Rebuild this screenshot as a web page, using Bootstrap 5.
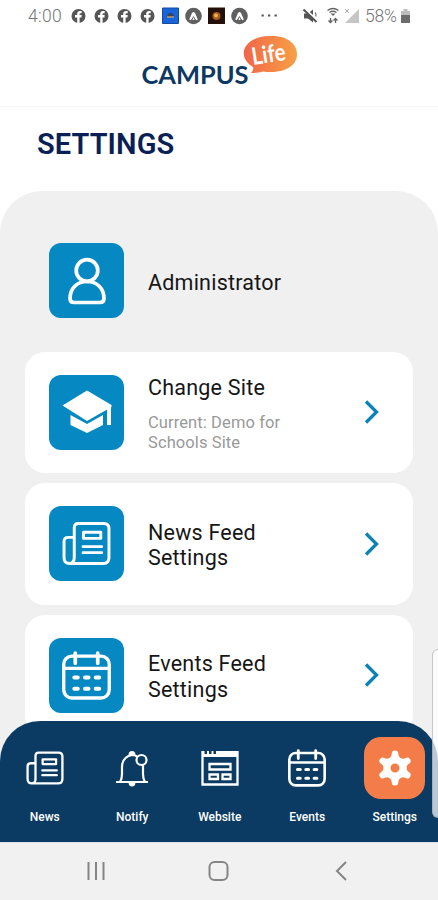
<!DOCTYPE html>
<html lang="en">
<head>
<meta charset="utf-8">
<meta name="viewport" content="width=device-width, initial-scale=1">
<title>Campus Life – Settings</title>
<link rel="stylesheet" href="https://cdn.jsdelivr.net/npm/bootstrap@5.3.0/dist/css/bootstrap.min.css">
<style>
  body { font-family: Roboto, "Liberation Sans", sans-serif; color: #161616; background: #fff; }
  svg { display: block; flex: none; }
  .phone { width: 438px; height: 900px; }
  .status { height: 32px; padding-left: 28px; color: #747474; font-size: 17.5px; font-weight: 300; line-height: 32px; }
  .status-time { width: 39px; letter-spacing: .3px; }
  .status-pct { width: 38px; padding-left: 4px; letter-spacing: -.2px; }
  .brand { height: 75px; border-bottom: 1px solid #f7f7f7; padding-left: 140px; }
  .page-title { height: 84px; padding: 18px 0 0 37px; font-size: 29px; line-height: 38px; font-weight: 600; letter-spacing: .1px; color: #0a1f56; }
  .panel { background: #f0f0f0; border-radius: 42px 42px 0 0; padding: 29px 25px 0; gap: 10px; }
  .entry { height: 121.5px; border-radius: 20px; padding: 0 33px 0 24px; border: 0; background: #fff; }
  .entry-user { background: transparent; }
  .tile { width: 75px; height: 75px; border-radius: 12px; background: #0689c2; margin-right: 24px; flex: none; }
  .entry-text { padding-top: 3px; }
  .entry-name { font-size: 21.5px; line-height: 25.5px; letter-spacing: .22px; }
  .entry-note { font-size: 16.5px; line-height: 20px; color: #999; letter-spacing: .1px; padding-top: 12px; }
  .bar-wrap { margin-top: -46px; }
  .tabs { height: 121px; border-radius: 40px 40px 0 0; background: #0b3b62; padding: 16px 0 0 1px; }
  .tab { width: 87.5px; flex: none; color: #fff; font-size: 12px; line-height: 16px; font-weight: 500; }
  .tab-icon { width: 61px; height: 62px; border-radius: 17px; margin-bottom: 10px; }
  .tab-on { background: #f47c48; }
  .sysbar { height: 58px; background: #f1f1f1; border-top: 1px solid #dfe3e6; padding: 0 2px 2px 0; }
  .edge { left: 432px; top: 649px; width: 12px; height: 169px; border-radius: 8px; border: 1px solid rgba(150,150,150,.5); background: rgba(255,255,255,.72); }
</style>
</head>
<body>
<svg width="0" height="0" class="position-absolute">
  <defs>
    <symbol id="fb" viewBox="0 0 23 20"><circle cx="11.500" cy="10" r="7" fill="#555"/><path d="M10.200 17.200V11.500H8V9h2.200V7.800C10.200 5.900 11.400 5 13 5h1.700v2.200h-1.100c-.8 0-1 .4-1 1V9h2.100l-.3 2.500h-1.800v5.700z" fill="#fff"/></symbol>
    <symbol id="apex" viewBox="0 0 23 20"><circle cx="11.500" cy="10" r="8.300" fill="#606060"/><path d="M7.200 13.500 10 7q1.500-2 3 0l2.800 6.500-1.600.8-2.700-4.300-2.700 4.300z" fill="#fff"/><path d="M10.500 14l1-3 1 3z" fill="#fff"/></symbol>
    <symbol id="paper" viewBox="0 0 48 42"><g fill="none" stroke="#fff" stroke-linejoin="round"><path stroke-width="2.900" d="M12 35V5.500q0-4 4-4h25q5 0 5 5V35q0 5.500-5.500 5.500H7.500Q2 40.500 2 35V19q0-4 4-4h6M12 35q0 5.500-5 5.500"/><path stroke-width="2.800" d="M21 10h17v6H21z"/><path stroke-width="2.600" stroke-linecap="round" d="M20.500 24h18.500M20.500 30h18.500"/></g></symbol>
    <symbol id="cal" viewBox="0 0 48 48"><g fill="none" stroke="#fff"><rect x="1.700" y="5" width="44.600" height="41" rx="8" stroke-width="3.300"/><path stroke-width="3" d="M2 17h44"/><path stroke-width="3.600" stroke-linecap="round" d="M13 2v10M35 2v10"/><path stroke-width="3.800" stroke-linecap="round" d="M12 26h3.500M22.500 26h3.500M33 26h3.500M12 37h3.500M22.500 37h3.500M33 37h3.500"/></g></symbol>
    <symbol id="next" viewBox="0 0 16 26"><path d="M2 2.500 12.500 13 2 23.500" fill="none" stroke="#0b83b6" stroke-width="3.300"/></symbol>
  </defs>
</svg>
<div class="phone d-flex flex-column position-relative overflow-hidden">
  <div class="status d-flex align-items-center flex-shrink-0">
    <span class="status-time">4:00</span>
    <svg width="23" height="20"><use href="#fb"/></svg>
    <svg width="23" height="20"><use href="#fb"/></svg>
    <svg width="23" height="20"><use href="#fb"/></svg>
    <svg width="23" height="20"><use href="#fb"/></svg>
    <svg width="23" height="20" viewBox="0 0 23 20"><path fill="#1765d8" stroke="#174a9c" d="M3.500 2h16v15.500h-16z"/><path d="M8 11q0-4 3.500-4T15 11z" fill="#39445b"/><path d="M8 11h7" stroke="#b89c70" stroke-width="1.500"/></svg>
    <svg width="23" height="20"><use href="#apex"/></svg>
    <svg width="23" height="20" viewBox="0 0 23 20"><path fill="#241008" d="M3 1.500h17v16.500H3z"/><circle cx="11.500" cy="10" r="4" fill="#a45d17"/><circle cx="11" cy="9.500" r="2" fill="#efb04b"/></svg>
    <svg width="23" height="20"><use href="#apex"/></svg>
    <svg width="48" height="20" viewBox="0 0 48 20"><path d="M10.500 9.500h2.300M17 9.500h2.300M23.500 9.500h2.300" stroke="#555" stroke-width="2"/></svg>
    <svg width="23" height="20" viewBox="0 0 23 20"><path d="M5 7.500h4L14 3.500v13l-5-4H5z" fill="#555"/><path d="M5.500 2.500 19 15" stroke="#fff" stroke-width="2"/><path d="M4.500 3.500 17.500 16" stroke="#555" stroke-width="2"/><path d="M16 6.500q1.500 1.500.8 4" fill="none" stroke="#777" stroke-width="1.300"/></svg>
    <svg width="22" height="20" viewBox="0 0 22 20"><g fill="none" stroke="#666" stroke-width="1.400"><path d="M5.500 4.500q5.500-4 11 0M7.500 6.500q3.500-2.500 7 0"/><path d="M8.500 12v4.500m-2-2 2 2 2-2M13.500 17v-4.500m-2 2 2-2 2 2"/></g><path d="M8.500 7.500h5L11 10z" fill="#666"/></svg>
    <svg width="17" height="20" viewBox="0 0 17 20"><path d="M15 3v14H1z" fill="#c6c6c6"/><path d="m1 3 4 4m0-4L1 7" stroke="#aaa"/></svg>
    <span class="status-pct">58%</span>
    <svg width="14" height="20" viewBox="0 0 14 20"><path d="M2 5h2.500V3h4v2H11v4H2z" fill="#bdbdbd"/><path d="M2 9h9v8H2z" fill="#6c6c6c"/></svg>
  </div>

  <header class="brand flex-shrink-0">
    <svg width="160" height="64" viewBox="140 32 160 64" role="img" aria-label="Campus Life">
      <defs><linearGradient id="bub"><stop offset="0" stop-color="#f26648"/><stop offset="1" stop-color="#f7a045"/></linearGradient></defs>
      <path d="M253 67c-17-10-10-30 16-31 17-1 28 7 28 18 0 12-12 18-26 18q-4 0-8-.6-5 1.500-12 1.600 3-3 2-6z" fill="url(#bub)"/>
      <text x="141.500" y="84.300" font-family="Lato, sans-serif" font-weight="700" font-size="24" textLength="107" lengthAdjust="spacingAndGlyphs" fill="#0c3862">CAMPUS</text>
      <text transform="translate(253 65) rotate(-9)" font-family="Lato, sans-serif" font-weight="700" font-size="24" textLength="34" lengthAdjust="spacingAndGlyphs" fill="#fff">Life</text>
    </svg>
  </header>

  <h1 class="page-title flex-shrink-0 m-0">SETTINGS</h1>

  <main class="panel d-flex flex-column overflow-hidden flex-grow-1">
    <section class="entry entry-user d-flex align-items-center flex-shrink-0">
      <div class="tile d-flex align-items-center justify-content-center">
        <svg width="40" height="48" viewBox="0 0 40 48"><g fill="none" stroke="#fff" stroke-width="3.700"><circle cx="20" cy="13.500" r="10.800"/><path d="M20 24.500c10 0 17 7 17 17q0 4-4 4H7q-4 0-4-4c0-10 7-17 17-17z"/></g></svg>
      </div>
      <div class="entry-name entry-text">Administrator</div>
    </section>
    <section class="entry card flex-row align-items-center flex-shrink-0">
      <div class="tile d-flex align-items-center justify-content-center">
        <svg width="50" height="44" viewBox="0 0 50 44"><g fill="#fff"><path d="M25 .500 49.500 15v2L25 31 .500 15.500z"/><path d="m8.500 25 16.500 9 16-9v10L25 43 8.500 35z"/><path d="M45 16h4v19h-4z"/></g></svg>
      </div>
      <div class="entry-text flex-grow-1">
        <div class="entry-name">Change Site</div>
        <div class="entry-note">Current: Demo for<br>Schools Site</div>
      </div>
      <svg width="16" height="26"><use href="#next"/></svg>
    </section>
    <section class="entry card flex-row align-items-center flex-shrink-0">
      <div class="tile d-flex align-items-center justify-content-center">
        <svg width="49" height="43"><use href="#paper"/></svg>
      </div>
      <div class="entry-name entry-text flex-grow-1">News Feed<br>Settings</div>
      <svg width="16" height="26"><use href="#next"/></svg>
    </section>
    <section class="entry card flex-row align-items-center flex-shrink-0">
      <div class="tile d-flex align-items-center justify-content-center">
        <svg width="49" height="49"><use href="#cal"/></svg>
      </div>
      <div class="entry-name entry-text flex-grow-1">Events Feed<br>Settings</div>
      <svg width="16" height="26"><use href="#next"/></svg>
    </section>
  </main>

  <div class="bar-wrap position-relative flex-shrink-0">
    <nav class="tabs d-flex">
      <div class="tab d-flex flex-column align-items-center">
        <div class="tab-icon d-flex align-items-center justify-content-center"><svg width="38" height="34"><use href="#paper"/></svg></div>News
      </div>
      <div class="tab d-flex flex-column align-items-center">
        <div class="tab-icon d-flex align-items-center justify-content-center">
          <svg width="34" height="37" viewBox="0 0 34 37"><g fill="none" stroke="#fff" stroke-width="2.200"><path d="M1 32h32M5 32q2-3 2-8v-7Q7 7 17 5q3 0 5 1.500M28 14.500V24q0 5 2 8"/><circle cx="26.500" cy="10" r="5"/></g><path d="M13.500 5q0-4 3.500-4t3.500 4zM13.500 32h7q0 4.500-3.500 4.500T13.500 32z" fill="#fff"/></svg>
        </div>Notify
      </div>
      <div class="tab d-flex flex-column align-items-center">
        <div class="tab-icon d-flex align-items-center justify-content-center">
          <svg width="38" height="36" viewBox="0 0 38 36"><g fill="none" stroke="#fff" stroke-width="2.300"><path d="M1.500 1v33.500h35V1"/><path d="M8.500 14h21v5.500h-21zM8.500 24.500h8.500V29H8.500zM21.500 24.500h8V29h-8z"/></g><path d="M1 1h2.500v3H6V1h2v3h2.500V1h2v3H15V1h22v6H1z" fill="#fff"/></svg>
        </div>Website
      </div>
      <div class="tab d-flex flex-column align-items-center">
        <div class="tab-icon d-flex align-items-center justify-content-center"><svg width="38" height="38"><use href="#cal"/></svg></div>Events
      </div>
      <div class="tab d-flex flex-column align-items-center">
        <div class="tab-icon tab-on d-flex align-items-center justify-content-center">
          <svg width="36" height="36" viewBox="-18 -18 36 36"><circle r="8" fill="none" stroke="#fff" stroke-width="7"/><g fill="#fff"><path id="tooth" d="M-6.500-9q3-1.500 3.300-6 .2-2.500 3.200-2.500t3.200 2.500q.3 4.500 3.300 6z"/><use href="#tooth" transform="rotate(60)"/><use href="#tooth" transform="rotate(120)"/><use href="#tooth" transform="rotate(180)"/><use href="#tooth" transform="rotate(240)"/><use href="#tooth" transform="rotate(300)"/></g></svg>
        </div>Settings
      </div>
    </nav>
    <div class="sysbar d-flex align-items-center justify-content-center">
      <svg width="300" height="24" viewBox="68 859 300 24"><g fill="none" stroke="#858585" stroke-width="2"><path d="M88.500 862v18M96 862v18M103.500 862v18"/><rect x="209.500" y="862" width="18" height="18" rx="5"/><path d="m346 862-9 9 9 9"/></g></svg>
    </div>
  </div>
  <div class="edge position-absolute"></div>
</div>
<script src="https://cdn.jsdelivr.net/npm/bootstrap@5.3.0/dist/js/bootstrap.bundle.min.js"></script>
</body>
</html>
